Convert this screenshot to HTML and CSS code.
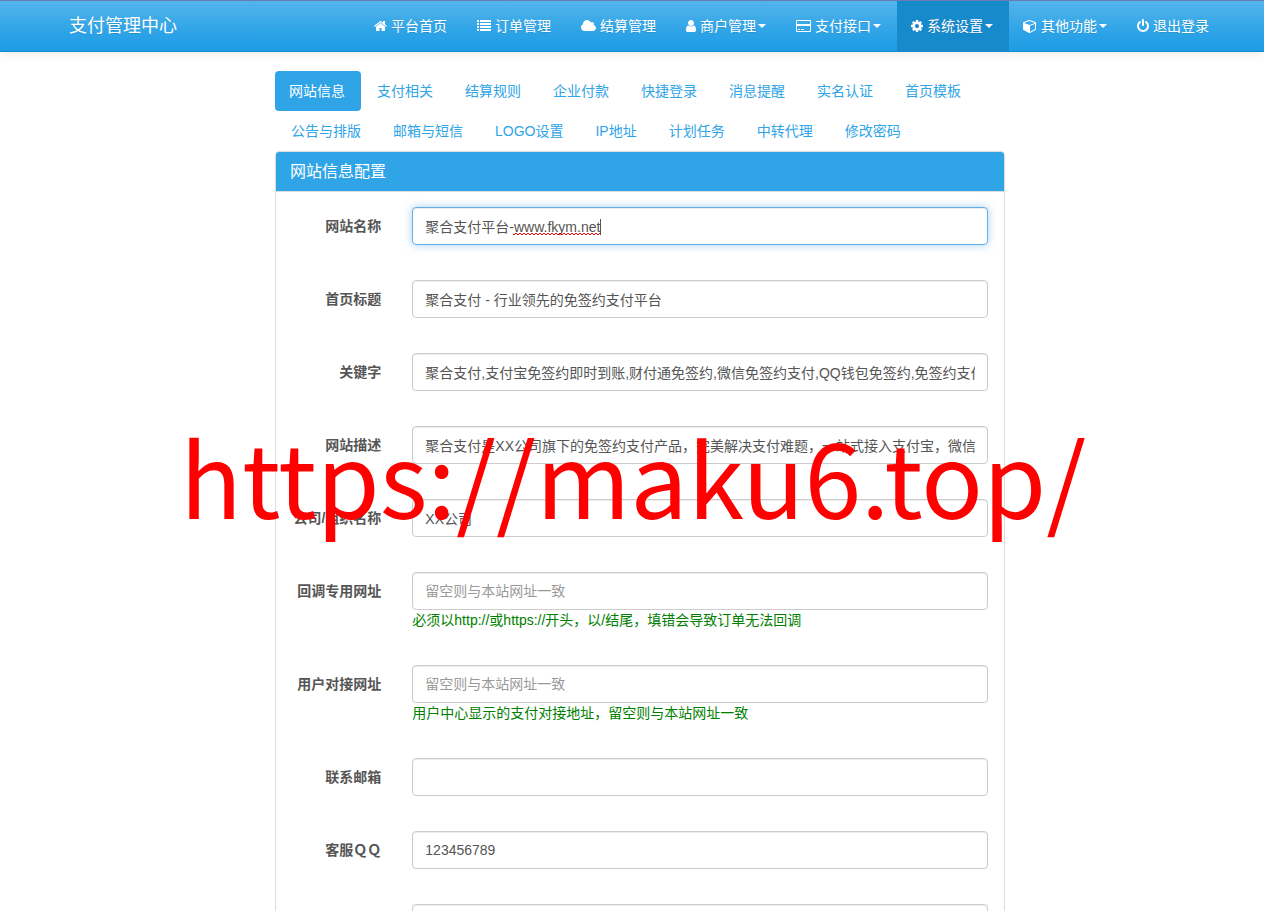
FILE: index.html
```html
<!DOCTYPE html>
<html lang="zh-cn">
<head>
    <meta charset="UTF-8">
    <meta name="viewport" content="width=device-width, initial-scale=1.0">
    <title>网站信息配置</title>
    <link rel="stylesheet" href="styles.css">
</head>
<body>
    <nav class="navbar">
        <div class="navbar-inner">
            <a class="navbar-brand" href="#">支付管理中心</a>
            <ul class="navbar-nav">
                <li><a href="#"><svg class="icon" width="13" height="14" viewBox="64 0 1664 1792"><path d="M1472 992v480q0 26-19 45t-45 19h-384v-384h-256v384h-384q-26 0-45-19t-19-45v-480q0-1 .5-3t.5-3l575-474 575 474q1 2 1 6zm223-69l-62 74q-8 9-21 11h-3q-13 0-21-7l-692-577-692 577q-12 8-24 7-13-2-21-11l-62-74q-8-10-7-23.5t11-21.5l719-599q32-26 76-26t76 26l244 204v-195q0-14 9-23t23-9h192q14 0 23 9t9 23v408l219 182q10 8 11 21.5t-7 23.5z"/></svg>平台首页</a></li>
                <li><a href="#"><svg class="icon" width="14" height="14" viewBox="0 0 14 14"><path d="M0 1h2v2H0zM3 1h11v2H3zM0 4h2v2H0zM3 4h11v2H3zM0 7h2v2H0zM3 7h11v2H3zM0 10h2v2H0zM3 10h11v2H3z"/></svg>订单管理</a></li>
                <li><a href="#"><svg class="icon" width="15" height="14" viewBox="64 0 1920 1792"><path d="M1984 1152q0 159-112.500 271.500t-271.500 112.500h-1088q-185 0-316.500-131.500t-131.500-316.500q0-132 71-241.500t187-163.500q-2-28-2-43 0-212 150-362t362-150q158 0 286.500 88t187.500 230q70-62 166-62 106 0 181 75t75 181q0 75-41 138 129 30 213 134.500t84 239.500z"/></svg>结算管理</a></li>
                <li><a href="#"><svg class="icon" width="10" height="14" viewBox="256 0 1280 1792"><path d="M1536 1399q0 109-62.500 187t-150.500 78h-854q-88 0-150.500-78t-62.500-187q0-85 8.500-160.500t31.500-152 58.500-131 94-89 134.500-34.500q131 128 313 128t313-128q76 0 134.500 34.500t94 89 58.500 131 31.500 152 8.500 160.500zm-256-887q0 159-112.500 271.500t-271.500 112.500-271.500-112.500-112.500-271.500 112.500-271.500 271.500-112.500 271.500 112.500 112.500 271.500z"/></svg>商户管理<span class="caret"></span></a></li>
                <li><a href="#"><svg class="icon" width="15" height="14" viewBox="0 0 15 14"><path fill-rule="evenodd" d="M1.300 1h12.400Q15 1 15 2.300v9.400Q15 13 13.700 13H1.300Q0 13 0 11.700V2.300Q0 1 1.300 1zM1 2v3h13V2zM1 7v5h13V7zM2 10h2v1H2zM5 10h3v1H5z"/></svg>支付接口<span class="caret"></span></a></li>
                <li class="active"><a href="#"><svg class="icon" width="12" height="14" viewBox="128 0 1536 1792"><path d="M1152 896q0-106-75-181t-181-75-181 75-75 181 75 181 181 75 181-75 75-181zm512-109v222q0 12-8 23t-20 13l-185 28q-19 54-39 91 35 50 107 138 10 12 10 25t-9 23q-27 37-99 108t-94 71q-12 0-26-9l-138-108q-44 23-91 38-16 136-29 186-7 28-36 28h-222q-14 0-24.500-8.500t-11.500-21.500l-28-184q-49-16-90-37l-141 107q-10 9-25 9-14 0-25-11-126-114-165-168-7-10-7-23 0-12 8-23 15-21 51-66.500t54-70.500q-27-50-41-99l-183-27q-13-2-21-12.500t-8-23.500v-222q0-12 8-23t19-13l186-28q14-46 39-92-40-57-107-138-10-12-10-24 0-10 9-23 26-36 98.500-107.500t94.500-71.500q13 0 26 10l138 107q44-23 91-38 16-136 29-186 7-28 36-28h222q14 0 24.500 8.500t11.500 21.500l28 184q49 16 90 37l142-107q9-9 24-9 13 0 25 10 129 119 165 170 7 8 7 22 0 12-8 23-15 21-51 66.500t-54 70.500q26 50 41 98l183 28q13 2 21 12.500t8 23.500z"/></svg>系统设置<span class="caret"></span></a></li>
                <li><a href="#"><svg class="icon" width="14" height="14" viewBox="0 0 1792 1792"><path d="M896 1629l640-349v-636l-640 233v752zm-64-865l698-254-698-254-698 254zm832-252v768q0 35-18 65t-49 47l-704 384q-28 16-61 16t-61-16l-704-384q-31-17-49-47t-18-65v-768q0-40 23-73t61-47l704-256q22-8 44-8t44 8l704 256q38 14 61 47t23 73z"/></svg>其他功能<span class="caret"></span></a></li>
                <li><a href="#"><svg class="icon" width="12" height="14" viewBox="128 0 1536 1792"><path d="M1664 896q0 156-61 298t-164 245-245 164-298 61-298-61-245-164-164-245-61-298q0-182 80.500-343t226.500-270q43-32 95.500-25t83.500 50q32 42 24.500 94.500t-49.500 84.500q-98 74-151.500 181t-53.500 228q0 104 40.500 198.500t109.500 163.500 163.500 109.500 198.500 40.500 198.500-40.500 163.500-109.500 109.500-163.500 40.500-198.500q0-121-53.500-228t-151.500-181q-42-32-49.500-84.500t24.500-94.500q31-43 84-50t95 25q146 109 226.500 270t80.500 343zm-640-768v640q0 52-38 90t-90 38-90-38-38-90v-640q0-52 38-90t90-38 90 38 38 90z"/></svg>退出登录</a></li>
            </ul>
        </div>
    </nav>

    <main class="container">
        <ul class="nav-pills">
            <li class="active"><a href="#">网站信息</a></li>
            <li><a href="#">支付相关</a></li>
            <li><a href="#">结算规则</a></li>
            <li><a href="#">企业付款</a></li>
            <li><a href="#">快捷登录</a></li>
            <li><a href="#">消息提醒</a></li>
            <li><a href="#">实名认证</a></li>
            <li><a href="#">首页模板</a></li>
            <li><a href="#">公告与排版</a></li>
            <li><a href="#">邮箱与短信</a></li>
            <li><a href="#">LOGO设置</a></li>
            <li><a href="#">IP地址</a></li>
            <li><a href="#">计划任务</a></li>
            <li><a href="#">中转代理</a></li>
            <li><a href="#">修改密码</a></li>
        </ul>

        <div class="panel">
            <div class="panel-heading">
                <h3 class="panel-title">网站信息配置</h3>
            </div>
            <form class="panel-body">
                <div class="form-group">
                    <label for="sitename">网站名称</label>
                    <div class="field">
                        <input type="text" class="form-control focused" id="sitename" value="聚合支付平台-www.fkym.net" spellcheck="false">
                        <span class="spell-mark"></span>
                    </div>
                </div>
                <div class="form-group">
                    <label for="title">首页标题</label>
                    <div class="field">
                        <input type="text" class="form-control" id="title" value="聚合支付 - 行业领先的免签约支付平台">
                    </div>
                </div>
                <div class="form-group">
                    <label for="keywords">关键字</label>
                    <div class="field">
                        <input type="text" class="form-control" id="keywords" value="聚合支付,支付宝免签约即时到账,财付通免签约,微信免签约支付,QQ钱包免签约,免签约支付">
                    </div>
                </div>
                <div class="form-group">
                    <label for="description">网站描述</label>
                    <div class="field">
                        <input type="text" class="form-control" id="description" value="聚合支付是XX公司旗下的免签约支付产品，完美解决支付难题，一站式接入支付宝，微信">
                    </div>
                </div>
                <div class="form-group">
                    <label for="orgname">公司/组织名称</label>
                    <div class="field">
                        <input type="text" class="form-control" id="orgname" value="XX公司">
                    </div>
                </div>
                <div class="form-group">
                    <label for="localurl">回调专用网址</label>
                    <div class="field">
                        <input type="text" class="form-control" id="localurl" placeholder="留空则与本站网址一致">
                        <p class="help">必须以http://或https://开头，以/结尾，填错会导致订单无法回调</p>
                    </div>
                </div>
                <div class="form-group">
                    <label for="apiurl">用户对接网址</label>
                    <div class="field">
                        <input type="text" class="form-control" id="apiurl" placeholder="留空则与本站网址一致">
                        <p class="help">用户中心显示的支付对接地址，留空则与本站网址一致</p>
                    </div>
                </div>
                <div class="form-group">
                    <label for="email">联系邮箱</label>
                    <div class="field">
                        <input type="text" class="form-control" id="email">
                    </div>
                </div>
                <div class="form-group">
                    <label for="kfqq">客服ＱＱ</label>
                    <div class="field">
                        <input type="text" class="form-control" id="kfqq" value="123456789">
                    </div>
                </div>
                <div class="form-group">
                    <div class="field">
                        <input type="text" class="form-control" id="qqqun" aria-label="加群链接">
                    </div>
                </div>
            </form>
        </div>
    </main>

    <div class="watermark">https://maku6.top/</div>
</body>
</html>
```
FILE: styles.css
```css
* {
    box-sizing: border-box;
}

body {
    margin: 0;
    padding-left: 16px;
    height: 100vh;
    overflow: hidden;
    font-family: "Liberation Sans", "Noto Sans CJK SC", sans-serif;
    font-size: 14px;
    line-height: 20px;
    color: #555;
    background-color: #fff;
}

ul {
    margin: 0;
    padding: 0;
    list-style: none;
}

a {
    color: #2fa4e7;
    text-decoration: none;
}

/* top bar */
.navbar {
    margin-left: -16px;
    padding-left: 16px;
    border-top: 1px solid #6a7ab5;
    border-bottom: 1px solid #178acc;
    background-image: linear-gradient(#54b4eb, #2fa4e7 60%, #1d9ce5);
    box-shadow: 0 1px 10px rgba(0, 0, 0, 0.1);
}

.navbar-inner {
    display: flex;
    justify-content: space-between;
    max-width: 1170px;
    margin: 0 auto;
}

.navbar a {
    display: flex;
    align-items: center;
    height: 50px;
    padding: 0 16px 0 14px;
    color: #fff;
    text-shadow: 0 1px 0 rgba(0, 0, 0, 0.1);
    white-space: nowrap;
}

.navbar .navbar-brand {
    font-size: 18px;
}

.navbar-nav {
    display: flex;
}

.navbar-nav .active a {
    background-color: #178acc;
}

.icon {
    flex: none;
    margin-right: 4px;
    fill: #fff;
}

.caret {
    margin-left: 2px;
    border-top: 4px solid #fff;
    border-left: 4px solid transparent;
    border-right: 4px solid transparent;
}

.container {
    max-width: 730px;
    margin: 0 auto;
    padding-top: 19px;
}

/* settings tabs */
.nav-pills {
    display: flex;
    flex-wrap: wrap;
}

.nav-pills li + li {
    margin-left: 2px;
}

.nav-pills a {
    display: block;
    padding: 10px 16px 10px 14px;
    border-radius: 4px;
}

.nav-pills .active a {
    color: #fff;
    background-color: #2fa4e7;
}

.panel {
    border: 1px solid #ddd;
    border-radius: 4px;
}

.panel-heading {
    padding: 10px 14px;
    border-bottom: 1px solid #ddd;
    border-radius: 3px 3px 0 0;
    background-color: #2fa4e7;
}

.panel-title {
    margin: 0;
    font-size: 16px;
    font-weight: normal;
    line-height: 19px;
    color: #fff;
}

.panel-body {
    padding-top: 15px;
}

.form-group {
    display: grid;
    grid-template-columns: 1fr 5fr;
    margin-bottom: 35px;
}

.form-group label {
    padding: 9px 16px 0 0;
    font-weight: bold;
    text-align: right;
    white-space: nowrap;
}

.field {
    grid-column: 2;
    position: relative;
    padding: 0 16px 0 15px;
}

.form-control {
    display: block;
    width: 100%;
    height: 38px;
    padding: 8px 12px;
    border: 1px solid #ccc;
    border-radius: 4px;
    font-family: inherit;
    font-size: 14px;
    color: #555;
    background-color: #fff;
    box-shadow: inset 0 1px 1px rgba(0, 0, 0, 0.075);
    outline: 0;
}

.form-control::placeholder {
    color: #999;
}

.form-control.focused {
    border-color: #66afe9;
    box-shadow: inset 0 1px 1px rgba(0, 0, 0, 0.075), 0 0 8px rgba(102, 175, 233, 0.6);
}

/* spelling underline and text cursor over the first box */
.spell-mark {
    position: absolute;
    top: 12px;
    left: 116px;
    width: 88px;
    height: 16px;
    border-right: 1px solid #555;
    background:
        linear-gradient(#f00, #f00) 0 15px / 2px 1px,
        linear-gradient(90deg, #f00 50%, transparent 50%) 0 15px / 4px 1px repeat-x,
        linear-gradient(90deg, transparent 50%, #f00 50%) 0 14px / 4px 1px repeat-x;
    background-repeat: no-repeat, repeat-x, repeat-x;
    pointer-events: none;
}

.help {
    margin: 0;
    color: #008000;
}

.watermark {
    position: absolute;
    top: 395px;
    left: 180px;
    font-family: "Noto Sans CJK SC", sans-serif;
    font-size: 102px;
    line-height: 160px;
    color: #f00;
    white-space: nowrap;
    pointer-events: none;
}
```
